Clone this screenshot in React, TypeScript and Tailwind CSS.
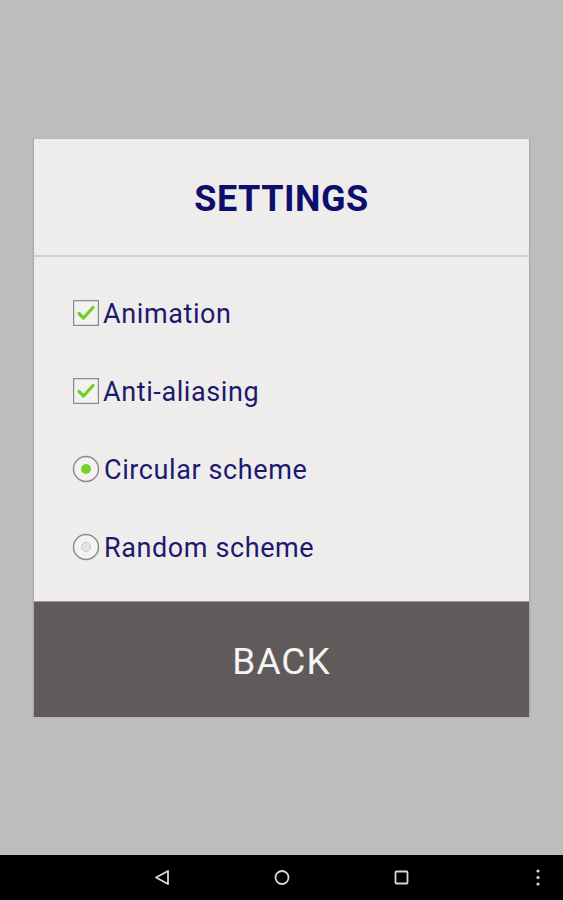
import React from 'react';

const Check = () => (
  <svg width="26" height="26" viewBox="0 0 26 26" className="shrink-0">
    <rect x="0.5" y="0.5" width="25" height="25" fill="#f3f2f1" stroke="#8c8c8c" strokeWidth="1.5" />
    <path d="M6 13.5 L10.5 18 L20 7.5" fill="none" stroke="#6fcf2c" strokeWidth="3.2" strokeLinecap="round" strokeLinejoin="round" />
  </svg>
);

const Radio = ({ on }: { on: boolean }) => (
  <svg width="28" height="28" viewBox="0 0 28 28" className="shrink-0 -ml-[1px]">
    <circle cx="14" cy="14" r="12.5" fill="#f4f3f2" stroke="#8a8a8a" strokeWidth="1.4" />
    {on ? (
      <circle cx="14" cy="14" r="5" fill="#78d42a" />
    ) : (
      <circle cx="14" cy="14" r="4.5" fill="#e6e5e4" stroke="#c9c8c7" strokeWidth="1" />
    )}
  </svg>
);

const rows = [
  { label: 'Animation', kind: 'check' },
  { label: 'Anti-aliasing', kind: 'check' },
  { label: 'Circular scheme', kind: 'radio-on' },
  { label: 'Random scheme', kind: 'radio-off' },
];

export default function App() {
  return (
    <div className="w-[563px] h-[900px] bg-[#bdbdbd] flex flex-col font-['Roboto',sans-serif]">
      <div className="flex-1 pt-[139px] pl-[33px]">
        <div className="w-[497px] bg-[#efedec] border-x border-[#a9a9a9] shadow-[0_0_1px_#999]">
          {/* Header */}
          <div className="h-[116px] flex items-center justify-center pt-[4px]">
            <h1 className="text-[36px] font-bold text-[#0e0e6c] tracking-[0.5px]">SETTINGS</h1>
          </div>
          <div className="h-[2px] bg-[#d3d1d0]" />

          {/* Options */}
          <div className="pt-[17px] pb-[15px] pl-[39px]">
            {rows.map((r) => (
              <div key={r.label} className="h-[78px] flex items-center gap-[4px]">
                {r.kind === 'check' ? <Check /> : <Radio on={r.kind === 'radio-on'} />}
                <span className="text-[27px] tracking-[0.6px] text-[#1b1a70] leading-none pt-[2px]">{r.label}</span>
              </div>
            ))}
          </div>

          {/* Back */}
          <div className="h-[116px] bg-[#605b5a] border-t border-[#9d9a99] flex items-center justify-center pt-[4px]">
            <span className="text-[37px] tracking-[1px] text-[#f4f4f4]">BACK</span>
          </div>
        </div>
      </div>

      {/* Nav bar */}
      <div className="h-[45px] bg-black flex items-center">
        <svg width="563" height="45" viewBox="0 0 563 45">
          <path d="M168 16 L156 22.5 L168 29 Z" fill="none" stroke="#d8d8d8" strokeWidth="1.8" strokeLinejoin="round" />
          <circle cx="282" cy="22.5" r="6.5" fill="none" stroke="#d8d8d8" strokeWidth="1.8" />
          <rect x="395.5" y="16.5" width="12" height="12" rx="1" fill="none" stroke="#d8d8d8" strokeWidth="1.8" />
          <circle cx="538" cy="16" r="1.6" fill="#d8d8d8" />
          <circle cx="538" cy="22.5" r="1.6" fill="#d8d8d8" />
          <circle cx="538" cy="29" r="1.6" fill="#d8d8d8" />
        </svg>
      </div>
    </div>
  );
}
